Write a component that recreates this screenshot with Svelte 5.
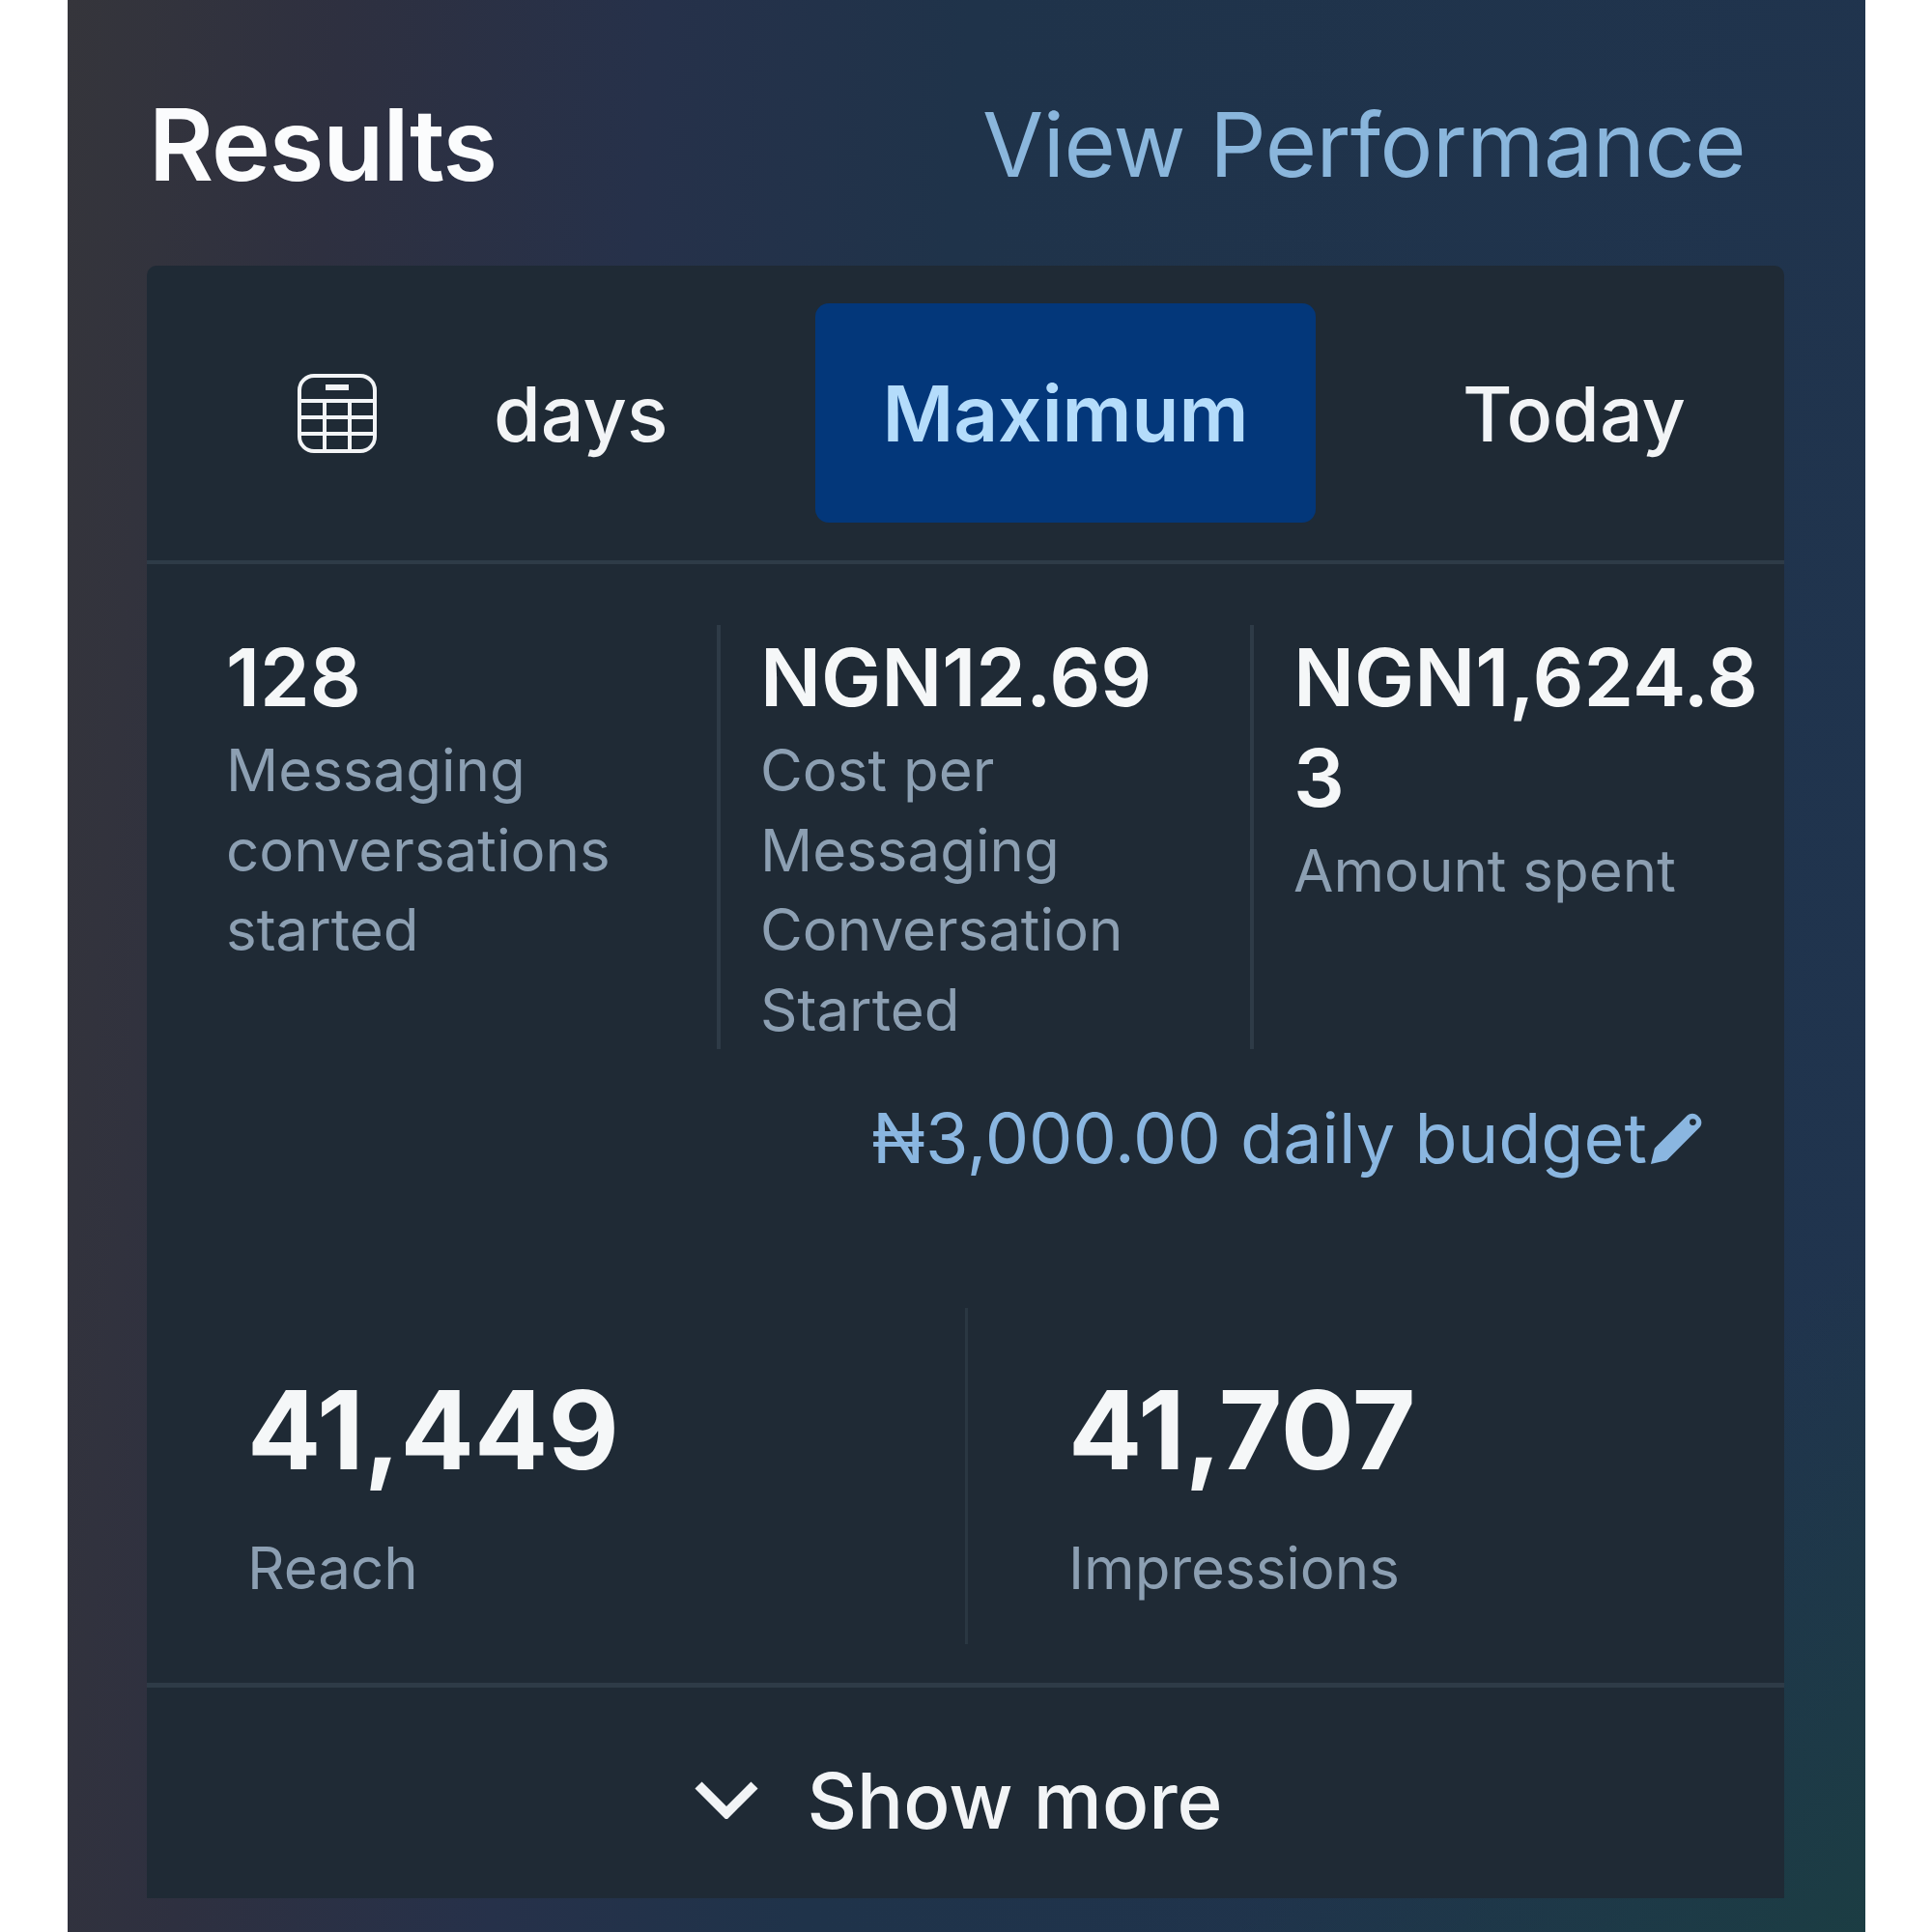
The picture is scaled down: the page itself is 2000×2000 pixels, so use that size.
<script>
  const metrics = [
    { value: '128', label: 'Messaging conversations started' },
    { value: 'NGN12.69', label: 'Cost per Messaging Conversation Started' },
    { value: 'NGN1,624.83', label: 'Amount spent' }
  ];
  const totals = [
    { value: '41,449', label: 'Reach' },
    { value: '41,707', label: 'Impressions' }
  ];
</script>

<div class="page">
  <section class="panel">
    <header class="head">
      <h2>Results</h2>
      <span class="link">View Performance</span>
    </header>

    <div class="card">
      <div class="tabs">
        <div class="tab tab--days">
          <svg class="calendar" viewBox="0 0 84 84" fill="none" stroke="currentColor" stroke-width="4">
            <rect x="3" y="3" width="78" height="78" rx="15" />
            <path d="M30 15h24" stroke-width="6" />
            <path d="M3 29h78M3 46h78M3 63h78M29 29v52M55 29v52" />
          </svg>
          <span>days</span>
        </div>
        <div class="tab tab--active">Maximum</div>
        <div class="tab tab--today">Today</div>
      </div>

      <div class="metrics">
        {#each metrics as m}
          <div class="metric">
            <div class="metric-value">{m.value}</div>
            <div class="metric-label">{m.label}</div>
          </div>
        {/each}
      </div>

      <div class="budget">
        <span>₦3,000.00 daily budget</span>
        <svg class="pencil" viewBox="0 0 60 60">
          <path d="M2 58l4-17L41 6c3-3 8-3 11 0l2 2c3 3 3 8 0 11L19 54z" fill="currentColor" />
          <circle cx="47" cy="13" r="3.5" fill="#1f2a35" />
        </svg>
      </div>

      <div class="totals">
        {#each totals as t}
          <div class="total">
            <div class="total-value">{t.value}</div>
            <div class="total-label">{t.label}</div>
          </div>
        {/each}
      </div>

      <div class="more">
        <svg class="chevron" viewBox="0 0 66 40" fill="none" stroke="currentColor" stroke-width="10">
          <path d="M4 5l29 29L62 5" />
        </svg>
        <span>Show more</span>
      </div>
    </div>
  </section>
</div>

<style>
  :global(body) {
    margin: 0;
    background: #fff;
  }

  .page {
    width: 2000px;
    height: 2000px;
    padding-left: 70px;
    box-sizing: border-box;
    overflow: hidden;
    font-family: Inter, "Liberation Sans", sans-serif;
  }

  .panel {
    width: 1861px;
    height: 2000px;
    padding: 0 84px 0 82px;
    box-sizing: border-box;
    background:
      linear-gradient(to top left, rgba(27, 62, 66, 0.9), rgba(27, 62, 66, 0) 18%),
      linear-gradient(95deg, #35353b 0%, #2e3040 14%, #26314a 30%, #1f334a 46%, #20344e 100%);
  }

  .head {
    display: flex;
    justify-content: space-between;
    align-items: center;
    height: 275px;
    padding: 24px 40px 0 0;
    box-sizing: border-box;
    filter: blur(0.7px);
  }

  h2 {
    margin: 0 0 0 2px;
    font-size: 103px;
    font-weight: 600;
    letter-spacing: -1px;
    color: #fbfcfd;
  }

  .link {
    font-size: 91.5px;
    font-weight: 400;
    letter-spacing: -0.5px;
    color: #8ab6dc;
  }

  .card {
    height: 1690px;
    background: #1f2a35;
    border-radius: 10px 10px 0 0;
    filter: blur(0.7px);
  }

  .tabs {
    display: grid;
    grid-template-columns: 692px 518px 1fr;
    align-items: center;
    height: 309px;
    padding-top: 4px;
    padding-bottom: 4px;
    box-sizing: border-box;
    border-bottom: 4px solid #2e3b47;
    font-size: 79px;
    font-weight: 500;
    color: #f2f4f6;
  }

  .tab {
    display: flex;
    align-items: center;
  }

  .tab--days {
    padding-left: 155px;
    gap: 120px;
  }

  .calendar {
    width: 84px;
    height: 84px;
  }

  .tab--active {
    justify-content: center;
    height: 227px;
    border-radius: 14px;
    background: #03377a;
    color: #b4dcfb;
    font-size: 80px;
    font-weight: 600;
  }

  .tab--today {
    justify-content: center;
    padding-left: 50px;
  }

  .metrics {
    display: grid;
    grid-template-columns: 590px 552px 1fr;
    margin-top: 63px;
    height: 437px;
  }

  .metric {
    padding: 2px 0 0 41px;
    border-left: 4px solid #2e3b47;
    box-sizing: border-box;
  }

  .metric:first-child {
    padding-left: 82px;
    padding-right: 40px;
    border-left: 0;
  }

  .metric-value {
    font-size: 83px;
    font-weight: 600;
    line-height: 104px;
    color: #f5f7f8;
    word-break: break-all;
  }

  .metric-label {
    margin-top: 3px;
    font-size: 60px;
    line-height: 82.5px;
    color: #8c9fb2;
  }

  .budget {
    display: flex;
    justify-content: flex-end;
    align-items: center;
    gap: 2px;
    margin-top: 50px;
    padding-right: 82px;
    font-size: 72px;
    color: #8ab6e0;
  }

  .pencil {
    width: 58px;
    height: 58px;
  }

  .totals {
    display: grid;
    grid-template-columns: 847px 1fr;
    margin-top: 133px;
    height: 348px;
  }

  .total {
    padding: 62px 0 0 104px;
    border-left: 3px solid #2a3742;
  }

  .total:first-child {
    border-left: 0;
  }

  .total-value {
    font-size: 113px;
    font-weight: 700;
    line-height: 128px;
    color: #f5f7f8;
  }

  .total-label {
    margin-top: 41px;
    font-size: 60px;
    line-height: 76px;
    color: #8c9fb2;
  }

  .more {
    display: flex;
    justify-content: center;
    align-items: center;
    gap: 50px;
    height: 232px;
    margin-top: 40px;
    padding-right: 14px;
    border-top: 5px solid #2e3b47;
    font-size: 80px;
    font-weight: 500;
    color: #f2f4f6;
  }

  .chevron {
    width: 66px;
    height: 40px;
  }
</style>
